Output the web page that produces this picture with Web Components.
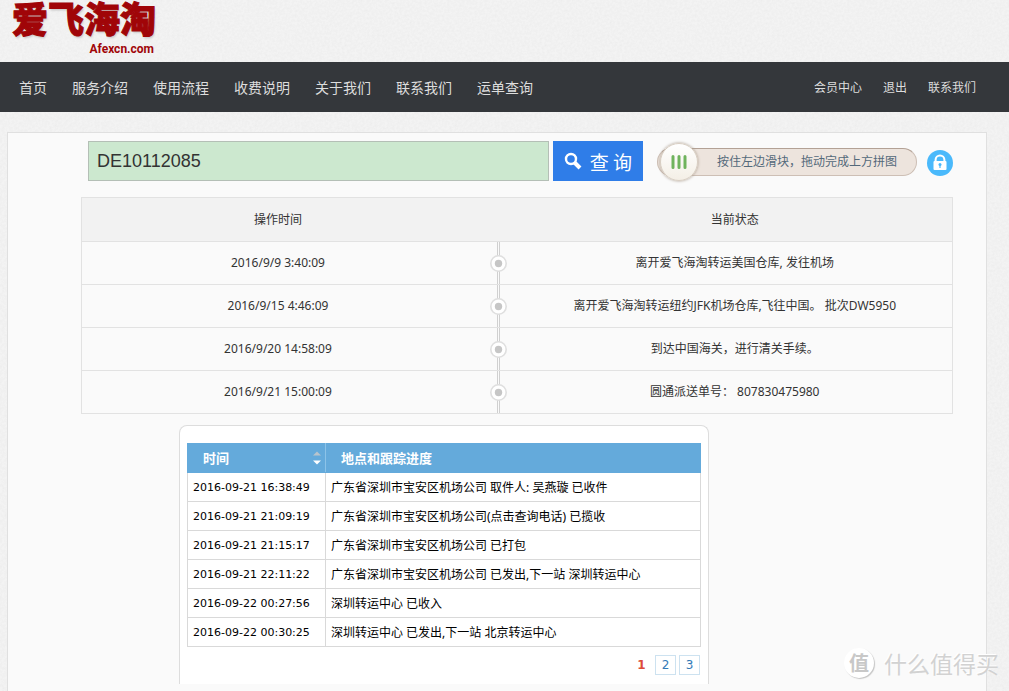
<!DOCTYPE html>
<html lang="zh-CN">
<head>
<meta charset="utf-8">
<meta name="viewport" content="width=device-width, initial-scale=1">
<title>运单查询 - 爱飞海淘</title>
<style>
html { height: 100%; }
body {
  margin: 0; min-height: 100%; position: relative; overflow: hidden;
  display: flex; flex-direction: column;
  font: 12px/20px "Noto Sans", "Noto Sans CJK SC", sans-serif;
  color: #333;
  background-color: #f3f3f3;
  background-image: url("data:image/svg+xml,%3Csvg xmlns='http://www.w3.org/2000/svg' width='200' height='200'%3E%3Cfilter id='n'%3E%3CfeTurbulence type='fractalNoise' baseFrequency='.4' numOctaves='3' stitchTiles='stitch'/%3E%3CfeColorMatrix values='0 0 0 0 .4 0 0 0 0 .4 0 0 0 0 .4 .15 0 0 0 -.05'/%3E%3C/filter%3E%3Crect width='200' height='200' filter='url(%23n)'/%3E%3C/svg%3E");
}
</style>
</head>
<body>
<site-logo></site-logo>
<site-nav>
  <nav-link>首页</nav-link>
  <nav-link>服务介绍</nav-link>
  <nav-link>使用流程</nav-link>
  <nav-link>收费说明</nav-link>
  <nav-link>关于我们</nav-link>
  <nav-link>联系我们</nav-link>
  <nav-link>运单查询</nav-link>
  <nav-link slot="account">会员中心</nav-link>
  <nav-link slot="account">退出</nav-link>
  <nav-link slot="account">联系我们</nav-link>
</site-nav>
<main-panel>
  <search-bar slot="search"></search-bar>
  <status-table></status-table>
  <courier-card>
    <courier-table></courier-table>
    <page-list slot="footer"></page-list>
  </courier-card>
</main-panel>
<water-mark>什么值得买</water-mark>

<script>
function define(name, html, setup) {
  const template = document.createElement('template');
  template.innerHTML = html;
  customElements.define(name, class extends HTMLElement {
    constructor() {
      super();
      this.attachShadow({ mode: 'open' }).append(template.content.cloneNode(true));
      if (setup) setup(this.shadowRoot);
    }
  });
}

define('site-logo', `
<style>
:host { display: block; height: 62px; flex: none; }
a { display: inline-block; padding-left: 12px; color: #a00508; text-decoration: none; text-align: right; }
strong { display: block; font: 900 36px/42px "Liberation Sans", "Noto Sans CJK SC", sans-serif; -webkit-text-stroke: 1px #a00508; text-shadow: 1px 2px 2px #ccc; }
small { display: block; padding-right: 2px; font: 700 12px/14px Roboto, sans-serif; }
</style>
<a href="#"><strong>爱飞海淘</strong><small>Afexcn.com</small></a>`);

define('nav-link', `
<style>
:host { display: block; }
a { color: #ddd; text-decoration: none; white-space: nowrap; }
</style>
<a href="#"><slot></slot></a>`);

define('site-nav', `
<style>
:host { display: block; background: #34373b; }
nav { display: flex; justify-content: space-between; align-items: center; height: 50px; box-sizing: border-box; padding: 2px 33px 0 19px; }
div { display: flex; gap: 25px; font-size: 14px; }
.account { gap: 21px; font-size: 12px; }
</style>
<nav><div><slot></slot></div><div class="account"><slot name="account"></slot></div></nav>`);

define('main-panel', `
<style>
:host { display: block; flex: 1; margin: 20px 22px 0 7px; border: 1px solid #e0e0e0; border-bottom: 0; background: #fafafa; }
main { padding: 8px 33px 0 73px; }
</style>
<main><slot name="search"></slot><slot></slot></main>`);

define('search-bar', `
<style>
:host { display: block; }
form { display: flex; align-items: center; gap: 4px; padding: 0 0 16px 7px; }
input { flex: 1; min-width: 0; height: 40px; box-sizing: border-box; border: 1px solid #b4bfb6; background: #cce8cf; padding: 0 8px; font: 18px "Liberation Sans", sans-serif; color: #333; outline: 0; }
button { width: 90px; height: 40px; border: 0; background: #2f7de8; color: #fff; padding: 0; display: flex; align-items: center; justify-content: center; gap: 8px; font: 19px "Noto Sans CJK SC", sans-serif; }
slide-check { margin-left: 10px; }
.lock { width: 26px; height: 26px; margin: 4px 0 0 6px; }
</style>
<form>
<input type="text" aria-label="运单号" value="DE10112085">
<button type="button"><svg width="18" height="18" viewBox="0 0 18 18" fill="none" stroke="#fff"><circle cx="7" cy="7" r="5" stroke-width="2.4"/><path d="M10.5 10.5L16 16" stroke-width="4"/></svg>查 询</button>
<slide-check>按住左边滑块，拖动完成上方拼图</slide-check>
<svg class="lock" viewBox="0 0 26 26"><circle cx="13" cy="13" r="13" fill="#4ab9fb"/><path d="M8.600 12V9.800a4.400 4.400 0 0 1 8.800 0V12" fill="none" stroke="#fff" stroke-width="2"/><rect x="6.500" y="11" width="13" height="9" rx="1" fill="#fff"/><circle cx="13" cy="14.500" r="1.500" fill="#4ab9fb"/><path d="M12.400 15h1.200v3h-1.200z" fill="#4ab9fb"/></svg>
</form>`);

define('slide-check', `
<style>
:host { display: block; width: 260px; flex: none; color: #54697a; }
.track { display: flex; align-items: center; height: 28px; box-sizing: border-box; border: 1px solid #cdbfb5; border-top-color: #b3a195; border-radius: 14px; background: #ede4dd; padding-left: 2px; margin-top: 2px; }
button { width: 38px; height: 38px; flex: none; border: 1px solid #d8cec2; border-radius: 50%; background: linear-gradient(#fff, #f4efe6); box-shadow: 0 0 3px #a89a8c; padding: 0; display: flex; align-items: center; justify-content: center; }
span { flex: 1; text-align: center; white-space: nowrap; }
</style>
<div class="track"><button type="button" aria-label="滑块"><svg width="16" height="16" viewBox="0 0 16 16" stroke="#6fb35c" stroke-width="3" stroke-linecap="round"><path d="M2 2.500v11M8 2.500v11M14 2.500v11"/></svg></button><span><slot></slot></span></div>`);

define('time-mark', `
<style>
:host { display: grid; place-items: center; height: 42px; background: linear-gradient(90deg, #d0d0d0 1px, #fafafa 1px 2px, #d0d0d0 2px) center / 3px 100% no-repeat; }
svg { display: block; }
</style>
<svg width="17" height="17" viewBox="0 0 17 17"><circle cx="8.500" cy="8.500" r="7.700" fill="#fff" stroke="#dfdfdf" stroke-width="1.600"/><circle cx="8.500" cy="8.500" r="3.700" fill="#c6c6c6"/></svg>`);

const statuses = [
  ['2016/9/9 3:40:09', '离开爱飞海淘转运美国仓库, 发往机场'],
  ['2016/9/15 4:46:09', '离开爱飞海淘转运纽约JFK机场仓库,飞往中国。 批次DW5950'],
  ['2016/9/20 14:58:09', '到达中国海关，进行清关手续。'],
  ['2016/9/21 15:00:09', '圆通派送单号： 807830475980'],
];
define('status-table', `
<style>
:host { display: block; }
table { width: 100%; border-collapse: collapse; table-layout: fixed; border: 1px solid #e2e2e2; }
tr { height: 43px; border-top: 1px solid #e2e2e2; }
thead tr { height: 44px; background: #f2f2f2; }
th, td { padding: 0; text-align: center; font-weight: 400; }
th:first-child { width: 45%; }
th:nth-child(2) { width: 5%; }
td:nth-child(2) { padding-left: 6px; }
</style>
<table><thead><tr><th>操作时间</th><th></th><th>当前状态</th></tr></thead><tbody></tbody></table>`, root => {
  root.querySelector('tbody').innerHTML = statuses.map(([time, text]) =>
    `<tr><td>${time}</td><td><time-mark></time-mark></td><td>${text}</td></tr>`).join('');
});

define('courier-card', `
<style>
:host { display: block; }
section { max-width: 530px; box-sizing: border-box; margin: 11px 0 0 98px; padding: 17px 7px 9px; border: 1px solid #ddd; border-bottom: 0; border-radius: 8px 8px 0 0; background: #fff; }
</style>
<section><slot></slot><slot name="footer"></slot></section>`);

const events = [
  ['2016-09-21 16:38:49', '广东省深圳市宝安区机场公司 取件人: 吴燕璇 已收件'],
  ['2016-09-21 21:09:19', '广东省深圳市宝安区机场公司(点击查询电话) 已揽收'],
  ['2016-09-21 21:15:17', '广东省深圳市宝安区机场公司 已打包'],
  ['2016-09-21 22:11:22', '广东省深圳市宝安区机场公司 已发出,下一站 深圳转运中心'],
  ['2016-09-22 00:27:56', '深圳转运中心 已收入'],
  ['2016-09-22 00:30:25', '深圳转运中心 已发出,下一站 北京转运中心'],
];
define('courier-table', `
<style>
:host { display: block; color: #000; }
table { width: 100%; border-collapse: collapse; table-layout: fixed; }
tr { height: 29px; }
th, td { border: 1px solid #d9d9d9; padding: 0 5px; text-align: left; white-space: nowrap; }
td { padding-top: 1px; }
th { background: #64aadb; border-color: #64aadb; color: #fff; font-size: 13px; padding: 0 8px 0 15px; }
th:first-child { width: 118px; border-right-color: #8cc3e8; padding-right: 4px; }
th div { display: flex; justify-content: space-between; align-items: center; }
td:first-child { font: 11px/20px "DejaVu Sans", sans-serif; }
</style>
<table><thead><tr><th><div>时间<svg width="8" height="14" viewBox="0 0 8 14"><path d="M0 4.500L4 .500l4 4z" fill="#b9c4cc"/><path d="M0 9.500h8l-4 4z" fill="#fff"/></svg></div></th><th>地点和跟踪进度</th></tr></thead><tbody></tbody></table>`, root => {
  root.querySelector('tbody').innerHTML = events.map(([time, text]) =>
    `<tr><td>${time}</td><td>${text}</td></tr>`).join('');
});

define('page-list', `
<style>
:host { display: block; font: 12px/18px "DejaVu Sans", sans-serif; }
nav { display: flex; justify-content: flex-end; gap: 3px; padding: 8px 1px 0 0; }
a, b { box-sizing: border-box; width: 21px; height: 20px; border: 1px solid #cde2f0; color: #337ab7; text-align: center; text-decoration: none; }
b { border-color: transparent; color: #dd4b39; }
</style>
<nav aria-label="分页"><b>1</b><a href="#">2</a><a href="#">3</a></nav>`);

define('water-mark', `
<style>
:host { position: absolute; right: 10px; bottom: 12px; display: flex; align-items: center; gap: 10px; font: 23px/32px "Noto Sans CJK SC", sans-serif; color: #d2d2d2; text-shadow: -1px -1px 0 #fff; }
i { width: 30px; height: 30px; border-radius: 50%; background: #fff; box-shadow: 1px 1px 1px #c4c4c4; font: 700 20px/29px "Noto Sans CJK SC", sans-serif; text-align: center; color: #c8c8c8; }
</style>
<i>值</i><span><slot></slot></span>`);
</script>
</body>
</html>
